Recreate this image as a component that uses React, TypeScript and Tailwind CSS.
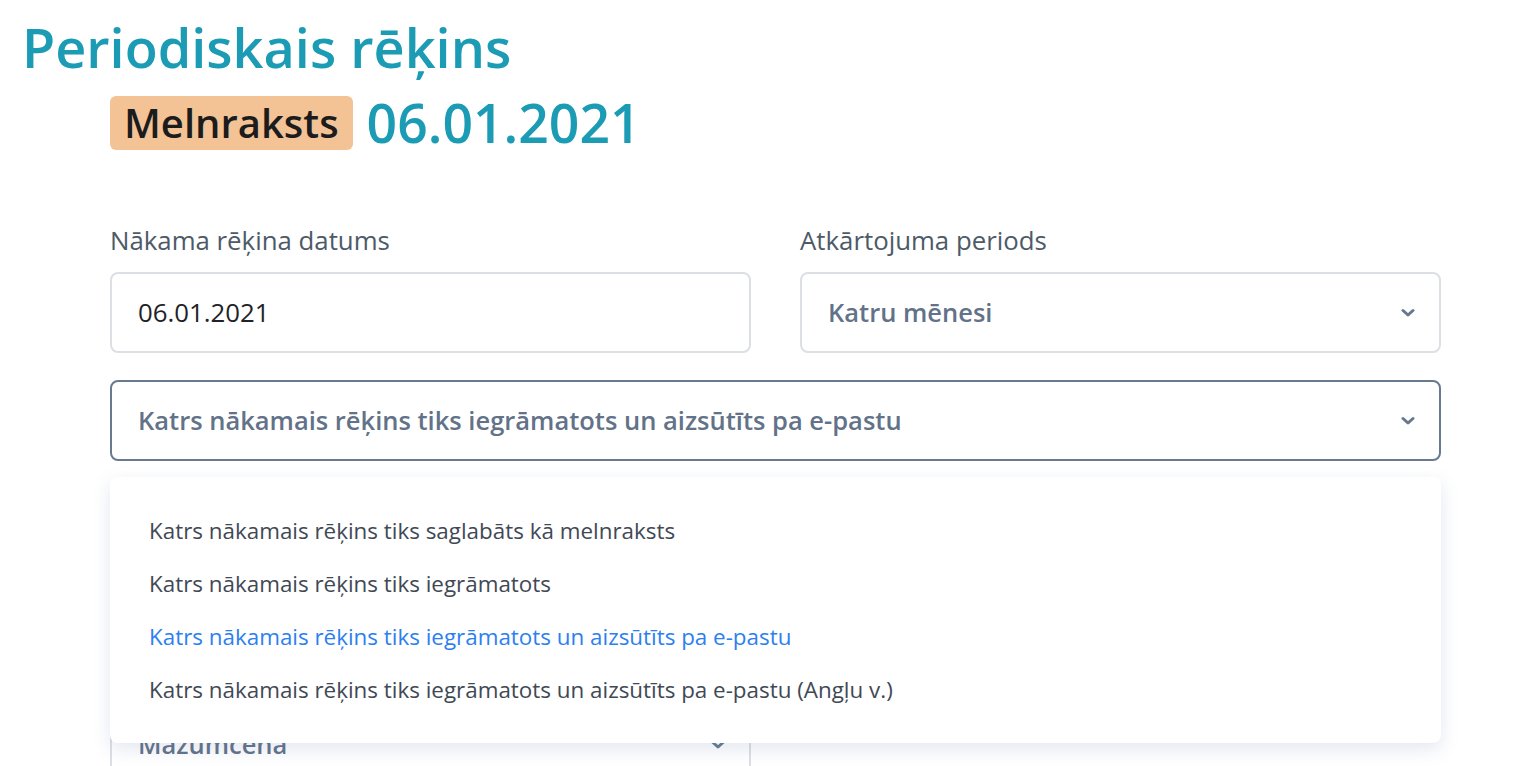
const font = { fontFamily: '"Open Sans", "Noto Sans", sans-serif' };

const options = [
  'Katrs nākamais rēķins tiks saglabāts kā melnraksts',
  'Katrs nākamais rēķins tiks iegrāmatots',
  'Katrs nākamais rēķins tiks iegrāmatots un aizsūtīts pa e-pastu',
  'Katrs nākamais rēķins tiks iegrāmatots un aizsūtīts pa e-pastu (Angļu v.)',
];

// thick little chevron like the select caret in the screenshot
function Chevron() {
  return (
    <svg width="14" height="10" viewBox="0 0 14 10" className="shrink-0">
      <path d="M2 2.5 L7 7 L12 2.5" fill="none" stroke="#66788f" strokeWidth="3" strokeLinecap="round" strokeLinejoin="round" />
    </svg>
  );
}

export default function App() {
  return (
    <div className="h-[766px] overflow-hidden bg-white" style={font}>
      <h1 className="pl-[22px] pt-[12px] text-[54px] font-semibold leading-[70px] text-[#1b9bb4]">
        Periodiskais rēķins
      </h1>

      <div className="mt-[14px] pl-[110px] pr-[91px]">
        {/* Status + date */}
        <div className="flex items-center gap-[14px]">
          <span className="rounded-[6px] bg-[#f3c396] px-[14px] text-[40px] font-semibold leading-[54px] text-[#1c1c1c]">
            Melnraksts
          </span>
          <span className="text-[53.5px] font-semibold leading-[54px] text-[#1b9bb4]">06.01.2021</span>
        </div>

        {/* Date + period */}
        <div className="mt-[74px] grid grid-cols-2 gap-[49px]">
          <div>
            <div className="text-[25.8px] leading-[32px] text-[#4d5a68]">Nākama rēķina datums</div>
            <div className="mt-[16px] flex h-[81px] items-center rounded-[8px] border-2 border-[#dcdfe3] px-[26px] text-[25.8px] text-[#1f2327]">
              06.01.2021
            </div>
          </div>
          <div>
            <div className="text-[25.8px] leading-[32px] text-[#4d5a68]">Atkārtojuma periods</div>
            <div className="mt-[16px] flex h-[81px] items-center justify-between rounded-[8px] border-2 border-[#dcdfe3] pl-[26px] pr-[24px] text-[25.5px] font-semibold text-[#627288]">
              Katru mēnesi
              <Chevron />
            </div>
          </div>
        </div>

        {/* Send mode select, open */}
        <div className="relative mt-[27px]">
          <div className="flex h-[81px] items-center justify-between rounded-[8px] border-2 border-[#687a90] pl-[26px] pr-[24px] text-[25.5px] font-semibold text-[#627288]">
            Katrs nākamais rēķins tiks iegrāmatots un aizsūtīts pa e-pastu
            <Chevron />
          </div>

          <ul className="absolute left-0 right-0 top-[97px] z-10 rounded-[8px] bg-white py-[27px] shadow-[0_6px_18px_rgba(100,120,170,0.18)]">
            {options.map((o, i) => (
              <li
                key={o}
                className={
                  'px-[39px] text-[22.4px] leading-[53px] ' +
                  (i === 2 ? 'text-[#2d7ff0]' : 'text-[#3f4955]')
                }
              >
                {o}
              </li>
            ))}
          </ul>

          {/* Fields hidden under the menu */}
          <div className="mt-[243px] grid grid-cols-2 gap-[49px]">
            <div className="flex h-[81px] items-center justify-between rounded-[8px] border-2 border-[#dcdfe3] pl-[26px] pr-[24px] text-[25.5px] font-semibold text-[#627288]">
              Mazumcena
              <Chevron />
            </div>
            <div />
          </div>
        </div>
      </div>
    </div>
  );
}
